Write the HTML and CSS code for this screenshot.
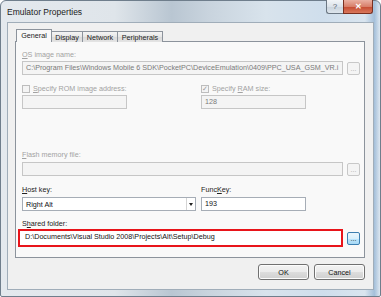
FILE: index.html
```html
<!DOCTYPE html>
<html lang="en">

<head>
  <meta charset="UTF-8">
  <title>Emulator Properties</title>
  <link rel="stylesheet" href="styles.css">
</head>

<body>

  <div class="window">
    <div class="titlebar">
      <span class="title">Emulator Properties</span>
      <div class="caption-buttons">
        <span class="cap-btn help">?</span>
        <span class="cap-btn close">&#x2715;</span>
      </div>
    </div>

    <div class="client">
      <div class="tabs">
        <span class="tab active">General</span>
        <span class="tab">Display</span>
        <span class="tab">Network</span>
        <span class="tab">Peripherals</span>
      </div>

      <div class="tab-page">
        <div class="field-label disabled"><u>O</u>S image name:</div>
        <div class="field-row">
          <div class="textbox disabled grow">C:\Program Files\Windows Mobile 6 SDK\PocketPC\DeviceEmulation\0409\PPC_USA_GSM_VR.i</div>
          <span class="browse disabled">...</span>
        </div>

        <div class="two-col">
          <div class="col">
            <div class="check disabled"><span class="box"></span><span><u>S</u>pecify ROM image address:</span></div>
            <div class="textbox disabled short"></div>
          </div>
          <div class="col">
            <div class="check disabled"><span class="box checked">&#x2713;</span><span>Specify <u>R</u>AM size:</span></div>
            <div class="textbox disabled short">128</div>
          </div>
        </div>

        <div class="field-label disabled flash-label"><u>F</u>lash memory file:</div>
        <div class="field-row">
          <div class="textbox disabled grow"></div>
          <span class="browse disabled">...</span>
        </div>

        <div class="two-col keys">
          <div class="col">
            <div class="field-label"><u>H</u>ost key:</div>
            <div class="select">
              <span class="select-value">Right Alt</span>
              <span class="select-arrow"></span>
            </div>
          </div>
          <div class="col">
            <div class="field-label">Func<u>K</u>ey:</div>
            <div class="textbox short">193</div>
          </div>
        </div>

        <div class="field-label shared-label">S<u>h</u>ared folder:</div>
        <div class="field-row shared-row">
          <div class="highlight grow">
            <div class="textbox">D:\Documents\Visual Studio 2008\Projects\Alt\Setup\Debug</div>
          </div>
          <span class="browse hot">...</span>
        </div>
      </div>

      <div class="dialog-buttons">
        <span class="btn">OK</span>
        <span class="btn">Cancel</span>
      </div>
    </div>
  </div>

</body>

</html>
```

FILE: styles.css
```css
* {
  box-sizing: border-box;
  margin: 0;
  padding: 0;
}

body {
  width: 381px;
  height: 297px;
  background: #fff;
  font-family: 'Liberation Sans', Arial, sans-serif;
  font-size: 7.2px;
  color: #222;
  overflow: hidden;
}

u {
  text-decoration: underline;
  text-underline-offset: 1px;
}

/* window frame */

.window {
  width: 381px;
  height: 297px;
  display: flex;
  flex-direction: column;
  padding: 0 6px 6px 6px;
  border: 1px solid #6f7e8c;
  border-radius: 6px 6px 2px 2px;
  background:
    linear-gradient(to right, rgba(255, 255, 255, 0) 96%, rgba(120, 160, 200, 0.55) 98.5%, rgba(255, 255, 255, 0) 100%),
    linear-gradient(to right, #e4e9ee 0%, #dfe5ea 30%, #b9c6d2 45%, #c9d4de 55%, #d8e3ec 70%, #cfdeec 85%, #dde7f0 100%);
}

.titlebar {
  height: 21px;
  display: flex;
  align-items: flex-start;
  justify-content: space-between;
}

.title {
  padding-top: 6px;
  font-size: 8.5px;
  color: #1b1b1b;
}

.caption-buttons {
  display: flex;
  margin-top: -1px;
  margin-right: 1px;
}

.cap-btn {
  height: 14px;
  display: flex;
  align-items: center;
  justify-content: center;
  border: 1px solid #6b7783;
  border-top: none;
  font-size: 8px;
}

.help {
  width: 17px;
  border-radius: 0 0 0 3px;
  border-right: none;
  background: linear-gradient(#f2f5f8, #dbe3ea 50%, #c9d3dd 51%, #dde5ec);
  color: #5a6470;
}

.close {
  width: 30px;
  border-radius: 0 0 3px 0;
  border-color: #7a3020;
  background: linear-gradient(#eab0a2, #d8806a 50%, #c54a30 51%, #d9785c);
  color: #fff;
  font-weight: bold;
}

/* client area */

.client {
  flex: 1;
  display: flex;
  flex-direction: column;
  padding: 7px 8px 9px 7px;
  border: 1px solid #a0adb9;
  background: #f0f0f0;
}

.tabs {
  display: flex;
  align-items: flex-end;
  height: 12px;
  margin-left: 1px;
  position: relative;
  z-index: 1;
  margin-bottom: -1px;
}

.tab {
  height: 11px;
  display: flex;
  align-items: center;
  justify-content: center;
  border: 1px solid #8c939c;
  border-bottom: none;
  border-left: none;
  background: linear-gradient(#f4f4f4, #e6e6e6 50%, #dadada 51%, #e4e4e4);
  color: #222;
}

.tab:nth-child(2) { width: 31px; }
.tab:nth-child(3) { width: 35px; }
.tab:nth-child(4) { width: 45px; }

.tab.active {
  width: 36px;
  height: 13px;
  border-left: 1px solid #8c939c;
  background: #f9f9f9;
  padding-bottom: 1px;
}

.tab-page {
  flex: 1;
  border: 1px solid #8c939c;
  background: #f9f9f9;
  padding: 8px 4px 0 6px;
}

.field-label {
  height: 9px;
  line-height: 9px;
  color: #222;
}

.disabled {
  color: #a2a2a2;
}

.field-row {
  display: flex;
  align-items: center;
  gap: 4px;
  margin-top: 2px;
}

.grow {
  flex: 1;
  min-width: 0;
}

.textbox {
  height: 14px;
  line-height: 12px;
  padding: 0 3px;
  border: 1px solid #a6adb6;
  background: #fff;
  color: #111;
  white-space: nowrap;
  overflow: hidden;
}

.textbox.disabled {
  border-color: #c6c6c6;
  background: #f4f4f4;
  color: #7a7a7a;
}

.textbox.short {
  width: 105px;
}

.browse {
  width: 13px;
  height: 13px;
  display: flex;
  align-items: center;
  justify-content: center;
  border: 1px solid #a8a8a8;
  border-radius: 2px;
  background: linear-gradient(#f6f6f6, #ececec);
  color: #333;
  font-size: 7px;
  line-height: 7px;
}

.browse.disabled {
  border-color: #c8c8c8;
  background: #f4f4f4;
  color: #a8a8a8;
}

.browse.hot {
  border-color: #3c7fb1;
  background: linear-gradient(#eaf6fd, #d9f0fc 50%, #bee6fd 51%, #a7d9f5);
  color: #1a1a1a;
}

.two-col {
  display: grid;
  grid-template-columns: 179px 1fr;
  margin-top: 9px;
}

.col {
  display: flex;
  flex-direction: column;
  align-items: flex-start;
  gap: 2px;
}

.check {
  height: 9px;
  display: flex;
  align-items: center;
  gap: 3px;
}

.box {
  width: 8px;
  height: 8px;
  display: flex;
  align-items: center;
  justify-content: center;
  border: 1px solid #bdbdbd;
  background: #f4f4f4;
  color: #9a9a9a;
  font-size: 7px;
}

.flash-label {
  margin-top: 41px;
}

.flash-label + .field-row {
  margin-top: 3px;
}

.keys {
  margin-top: 9px;
}

.keys .col {
  gap: 3px;
}

.select {
  width: 174px;
  height: 14px;
  display: flex;
  align-items: center;
  justify-content: space-between;
  border: 1px solid #a6adb6;
  background: #fff;
  color: #111;
}

.select-value {
  padding-left: 3px;
}

.select-arrow {
  width: 9px;
  height: 12px;
  border-left: 1px solid #d4d4d4;
  position: relative;
}

.select-arrow::after {
  content: "";
  position: absolute;
  left: 2px;
  top: 5px;
  border-left: 2.5px solid transparent;
  border-right: 2.5px solid transparent;
  border-top: 3px solid #222;
}

.shared-label {
  margin-top: 8px;
}

.shared-row {
  margin-top: 1px;
}

.highlight {
  margin-left: -4px;
  padding: 0 0 0 2px;
  border: 2px solid #e8141a;
  background: #fff;
}

.highlight .textbox {
  border: none;
  padding-left: 3px;
}

/* OK / Cancel */

.dialog-buttons {
  display: flex;
  justify-content: flex-end;
  gap: 5px;
  margin-top: 6px;
}

.btn {
  width: 51px;
  height: 16px;
  display: flex;
  align-items: center;
  justify-content: center;
  border: 1px solid #707070;
  border-radius: 3px;
  background: linear-gradient(#f2f2f2, #ebebeb 50%, #dddddd 51%, #cfcfcf);
  box-shadow: inset 0 0 0 1px #fcfcfc;
  color: #111;
}
```
